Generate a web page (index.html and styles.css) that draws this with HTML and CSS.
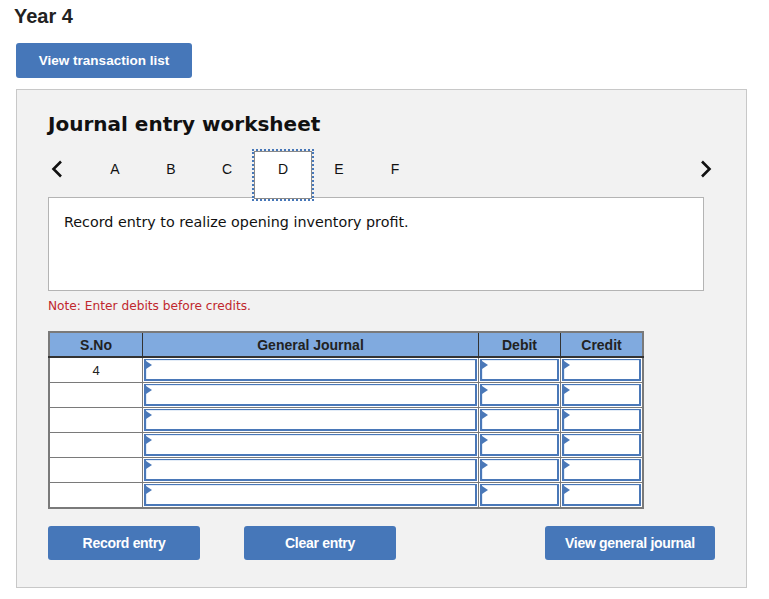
FILE: index.html
```html
<!DOCTYPE html>
<html lang="en">
<head>
    <meta charset="UTF-8">
    <title>Year 4 - Journal entry worksheet</title>
    <link rel="stylesheet" href="styles.css">
</head>
<body>
    <h2 class="year">Year 4</h2>
    <button class="btn btn-list">View transaction list</button>

    <div class="worksheet">
        <h3 class="ws-title">Journal entry worksheet</h3>

        <div class="tabs">
            <span class="arrow prev">
                <svg width="12" height="18" viewBox="0 0 12 18"><polyline points="10,1.5 2.5,9 10,16.5" fill="none" stroke="#111" stroke-width="2.6"/></svg>
            </span>
            <span class="tab">A</span>
            <span class="tab">B</span>
            <span class="tab">C</span>
            <span class="tab active">D</span>
            <span class="tab">E</span>
            <span class="tab">F</span>
            <span class="arrow next">
                <svg width="12" height="18" viewBox="0 0 12 18"><polyline points="2,1.5 9.5,9 2,16.5" fill="none" stroke="#111" stroke-width="2.6"/></svg>
            </span>
        </div>

        <div class="entry-box">Record entry to realize opening inventory profit.</div>

        <p class="note">Note: Enter debits before credits.</p>

        <table class="journal">
            <thead>
                <tr>
                    <th class="col-no">S.No</th>
                    <th class="col-acc">General Journal</th>
                    <th class="col-amt">Debit</th>
                    <th class="col-amt">Credit</th>
                </tr>
            </thead>
            <tbody>
                <tr>
                    <td class="sno">4</td>
                    <td><div class="cell"></div></td>
                    <td><div class="cell"></div></td>
                    <td><div class="cell"></div></td>
                </tr>
                <tr>
                    <td class="sno"></td>
                    <td><div class="cell"></div></td>
                    <td><div class="cell"></div></td>
                    <td><div class="cell"></div></td>
                </tr>
                <tr>
                    <td class="sno"></td>
                    <td><div class="cell"></div></td>
                    <td><div class="cell"></div></td>
                    <td><div class="cell"></div></td>
                </tr>
                <tr>
                    <td class="sno"></td>
                    <td><div class="cell"></div></td>
                    <td><div class="cell"></div></td>
                    <td><div class="cell"></div></td>
                </tr>
                <tr>
                    <td class="sno"></td>
                    <td><div class="cell"></div></td>
                    <td><div class="cell"></div></td>
                    <td><div class="cell"></div></td>
                </tr>
                <tr>
                    <td class="sno"></td>
                    <td><div class="cell"></div></td>
                    <td><div class="cell"></div></td>
                    <td><div class="cell"></div></td>
                </tr>
            </tbody>
        </table>

        <div class="actions">
            <button class="btn btn-record">Record entry</button>
            <button class="btn btn-clear">Clear entry</button>
            <button class="btn btn-view">View general journal</button>
        </div>
    </div>
</body>
</html>
```

FILE: styles.css
```css
body {
    margin: 0;
    padding: 0 0 0 16px;
    font-family: 'Liberation Sans', Arial, sans-serif;
    color: #222;
    background: #fff;
}
.year {
    margin: 0 0 0 -2px;
    padding-top: 5px;
    font-size: 20px;
    line-height: 22px;
    font-weight: bold;
    color: #222;
}
.btn {
    display: block;
    height: 34px;
    border: none;
    border-radius: 3px;
    background-color: #4677b9;
    color: #fff;
    font-family: 'Liberation Sans', Arial, sans-serif;
    font-size: 13px;
    font-weight: bold;
    letter-spacing: -0.3px;
    cursor: pointer;
}
.btn-list {
    margin-top: 16px;
    width: 176px;
    height: 35px;
    letter-spacing: 0;
    font-size: 13.5px;
}
.worksheet {
    box-sizing: border-box;
    width: 731px;
    height: 499px;
    margin-top: 11px;
    padding: 21px 31px 0 31px;
    background: #f2f2f2;
    border: 1px solid #c8c8c8;
}
.ws-title {
    margin: 0;
    font-family: 'DejaVu Sans', Verdana, sans-serif;
    font-size: 20px;
    line-height: 26px;
    font-weight: bold;
    color: #111;
}
.tabs {
    display: flex;
    align-items: flex-start;
    height: 46px;
    margin-top: 14px;
    position: relative;
    z-index: 1;
}
.arrow {
    display: flex;
    height: 36px;
    align-items: center;
}
.prev {
    width: 39px;
    padding-left: 3px;
    box-sizing: border-box;
}
.next {
    margin-left: auto;
    margin-right: -5px;
    width: 20px;
}
.tab {
    box-sizing: border-box;
    width: 56px;
    height: 46px;
    line-height: 36px;
    text-align: center;
    font-size: 14px;
    color: #111;
}
.tab.active {
    width: 58px;
    height: 48px;
    margin: 0 -1px;
    background: #fff;
    border: 1px solid #8a8a8a;
    outline: 2px dotted #4677b9;
    outline-offset: 0;
    line-height: 34px;
}
.entry-box {
    box-sizing: border-box;
    width: 656px;
    height: 94px;
    padding: 15px 15px;
    background: #fff;
    border: 1px solid #b4b4b4;
    font-family: 'DejaVu Sans', Verdana, sans-serif;
    font-size: 14.3px;
    line-height: 18px;
    color: #111;
}
.note {
    margin: 8px 0 0 0;
    font-family: 'DejaVu Sans', Verdana, sans-serif;
    font-size: 12.2px;
    line-height: 14px;
    color: #c0272d;
}
.journal {
    margin-top: 18px;
    width: 590px;
    border-collapse: collapse;
    border: 2px solid #7a7a7a;
    table-layout: fixed;
}
.journal th {
    height: 23px;
    padding: 0;
    background-color: #80aadf;
    border-right: 1px solid #333;
    border-bottom: 2px solid #333;
    font-size: 14px;
    font-weight: bold;
    color: #222;
}
.journal th:last-child {
    border-right: none;
}
.col-no { width: 92px; }
.col-acc { width: 335px; }
.col-amt { width: 81px; }
.journal td {
    height: 22px;
    padding: 1px;
    background: #fff;
    border: 1px solid #7a7a7a;
}
.journal td.sno {
    text-align: center;
    font-size: 13px;
    vertical-align: top;
    padding-top: 5px;
    height: 18px;
}
.cell {
    position: relative;
    box-sizing: border-box;
    height: 22px;
    background: #fff;
    border-style: solid;
    border-color: #4a78b8;
    border-width: 1px 2px 2px 2px;
    box-shadow: inset 1px 1px 0 #e3ecf7;
}
.cell::before {
    content: '';
    position: absolute;
    top: 1px;
    left: 0;
    border-top: 4px solid transparent;
    border-bottom: 4px solid transparent;
    border-left: 6px solid #4a78b8;
}
.actions {
    display: flex;
    margin-top: 17px;
}
.btn-record,
.btn-clear {
    width: 152px;
    font-size: 14px;
}
.btn-clear {
    margin-left: 44px;
}
.btn-view {
    width: 170px;
    margin-left: 149px;
    font-size: 14px;
}
```
